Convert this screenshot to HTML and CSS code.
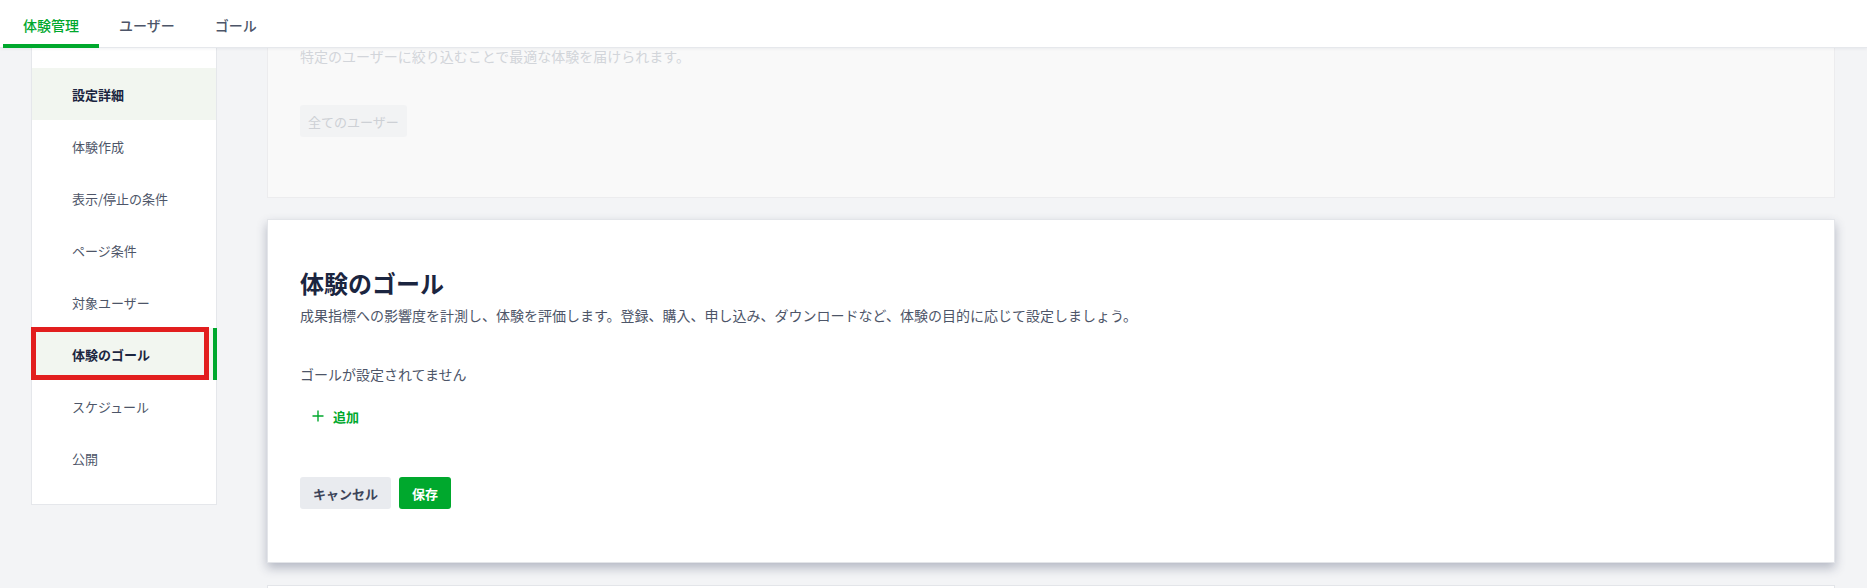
FILE: index.html
```html
<!DOCTYPE html>
<html lang="ja">
<head>
<meta charset="utf-8">
<title>体験管理</title>
<link rel="stylesheet" href="styles.css">
</head>
<body>
<header class="topbar">
  <nav class="tabs">
    <a class="tab tab-active">体験管理</a>
    <a class="tab">ユーザー</a>
    <a class="tab">ゴール</a>
  </nav>
</header>
<div class="layout">
  <aside class="sidebar">
    <div class="side-item side-section">設定詳細</div>
    <div class="side-item">体験作成</div>
    <div class="side-item">表示/停止の条件</div>
    <div class="side-item">ページ条件</div>
    <div class="side-item">対象ユーザー</div>
    <div class="side-item side-active">体験のゴール<span class="annot"></span></div>
    <div class="side-item">スケジュール</div>
    <div class="side-item">公開</div>
  </aside>
  <main class="main">
    <section class="card card-faded">
      <p class="faded-text">特定のユーザーに絞り込むことで最適な体験を届けられます。</p>
      <span class="faded-chip">全てのユーザー</span>
    </section>
    <section class="card card-focus">
      <h2 class="card-title">体験のゴール</h2>
      <p class="card-desc">成果指標への影響度を計測し、体験を評価します。登録、購入、申し込み、ダウンロードなど、体験の目的に応じて設定しましょう。</p>
      <p class="empty-text">ゴールが設定されてません</p>
      <button class="add-btn" type="button">
        <svg width="12" height="12" viewBox="0 0 12 12" aria-hidden="true"><path d="M6 0.5V11.5M0.5 6H11.5" stroke="#00a82d" stroke-width="1.4" fill="none"/></svg>
        <span>追加</span>
      </button>
      <div class="actions">
        <button class="btn btn-cancel" type="button">キャンセル</button>
        <button class="btn btn-save" type="button">保存</button>
      </div>
    </section>
    <section class="card card-next"></section>
  </main>
</div>
</body>
</html>
```
FILE: styles.css
```css
* { box-sizing: border-box; }
html, body { height: 100%; }
body {
  margin: 0;
  background: #f3f4f6;
  font-family: "Noto Sans CJK JP", "Noto Sans", sans-serif;
  color: #4d5568;
  overflow: hidden;
}
.topbar {
  position: relative;
  z-index: 2;
  height: 48px;
  background: #ffffff;
  border-bottom: 1px solid #e6e8ec;
  box-shadow: 0 1px 3px rgba(20, 30, 60, 0.06);
}
.tabs {
  display: flex;
  height: 100%;
  padding-left: 3px;
}
.tab {
  display: flex;
  align-items: center;
  height: 48px;
  padding: 6px 20px 0;
  border-bottom: 4px solid transparent;
  font-size: 14px;
  font-weight: 500;
  color: #4d5568;
  cursor: pointer;
}
.tab-active {
  color: #00a82d;
  border-bottom-color: #00a82d;
}
.layout {
  display: flex;
  align-items: flex-start;
  gap: 50px;
  padding: 0 32px 0 31px;
  margin-top: -1px;
}
.sidebar {
  width: 186px;
  flex: none;
  background: #ffffff;
  border: 1px solid #e5e7eb;
  border-top: none;
  padding: 21px 0 20px;
}
.side-item {
  position: relative;
  height: 52px;
  display: flex;
  align-items: center;
  padding-left: 40px;
  font-size: 13px;
  color: #4d5568;
}
.side-section {
  background: #f2f6f0;
  color: #1b2540;
  font-weight: 600;
}
.side-active {
  background: #f2f6f0;
  color: #1b2540;
  font-weight: 600;
}
.side-active::after {
  content: "";
  position: absolute;
  right: -1px;
  top: 0;
  bottom: 0;
  width: 4px;
  background: #00a82d;
}
.annot {
  position: absolute;
  left: -1px;
  right: 7px;
  top: -1px;
  bottom: 0;
  border: 5px solid #e21e1e;
  pointer-events: none;
}
.main {
  flex: 1;
  min-width: 0;
  margin-top: 1px;
}
.card {
  background: #ffffff;
  border: 1px solid #e3e5e9;
}
.card-faded {
  background: #f9f9f9;
  border-color: #ececee;
  border-top: none;
  padding: 0 32px 60px;
}
.faded-text {
  margin: 0;
  font-size: 14px;
  line-height: 16px;
  color: #d2d5da;
}
.faded-chip {
  display: inline-flex;
  align-items: center;
  height: 32px;
  margin-top: 41px;
  padding: 0 8px;
  background: #f2f3f4;
  border-radius: 3px;
  font-size: 13px;
  color: #cdd0d5;
}
.card-focus {
  margin-top: 21px;
  padding: 47px 32px 53px;
  box-shadow: 0 5px 10px rgba(35, 45, 80, 0.3);
  position: relative;
  z-index: 1;
}
.card-title {
  margin: 0;
  font-size: 24px;
  line-height: 32px;
  font-weight: 600;
  color: #1b2540;
}
.card-desc {
  margin: 6px 0 0;
  font-size: 14px;
  line-height: 20px;
  color: #4d5568;
}
.empty-text {
  margin: 39px 0 0;
  font-size: 14px;
  line-height: 20px;
  color: #4d5568;
}
.add-btn {
  display: inline-flex;
  align-items: center;
  gap: 9px;
  height: 32px;
  margin-top: 16px;
  padding: 0 12px;
  border: none;
  background: transparent;
  font-family: inherit;
  font-size: 13px;
  font-weight: 700;
  color: #00a82d;
  cursor: pointer;
}
.actions {
  display: flex;
  gap: 8px;
  margin-top: 45px;
}
.btn {
  height: 32px;
  padding: 0 13px;
  border: none;
  border-radius: 3px;
  font-family: inherit;
  font-size: 13px;
  font-weight: 700;
  cursor: pointer;
}
.btn-cancel {
  background: #e9ebef;
  color: #3d4459;
}
.btn-save {
  background: #00a82d;
  color: #ffffff;
}
.card-next {
  margin-top: 22px;
  height: 40px;
}
```
